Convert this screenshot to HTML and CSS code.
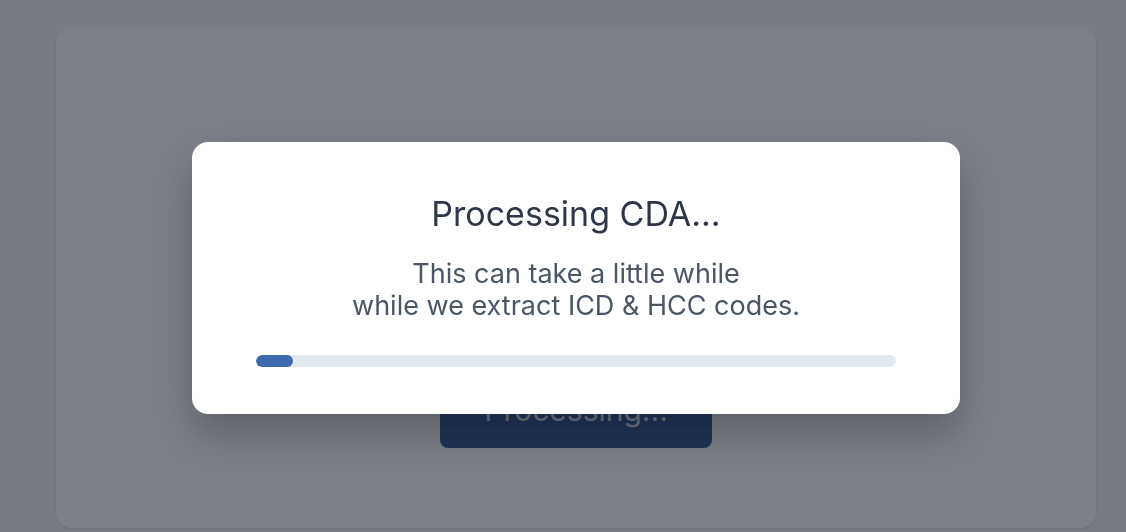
FILE: index.html
```html
<!DOCTYPE html>
<html lang="en">
  <head>
    <meta charset="UTF-8">
    <meta name="viewport" content="width=device-width, initial-scale=1.0">
    <title>Processing CDA</title>
    <link rel="stylesheet" href="styles.css">
  </head>
  <body>
    <div class="page">
      <div class="card">
        <button class="btn" disabled>Processing...</button>
      </div>
    </div>

    <div class="overlay">
      <div class="modal">
        <h2 class="modal-title">Processing CDA...</h2>
        <p class="modal-text">This can take a little while<br>while we extract ICD &amp; HCC codes.</p>
        <div class="progress">
          <div class="progress-fill" style="width: 5.8%"></div>
        </div>
      </div>
    </div>
  </body>
</html>
```

FILE: styles.css
```css
body {
    margin: 0;
    font-family: Inter, "Noto Sans", sans-serif;
    background-color: #f3f4f6;
    height: 100vh;
    overflow: hidden;
}

.page {
    padding: 27px 30px 0 56px;
}

.card {
    width: 1040px;
    height: 501px;
    background-color: #fff;
    border-radius: 16px;
    box-shadow: 0 1px 3px rgba(0, 0, 0, 0.1);
    display: flex;
    justify-content: center;
    align-items: flex-end;
    padding-bottom: 80px;
    box-sizing: border-box;
}

.btn {
    width: 272px;
    height: 76px;
    border: none;
    border-radius: 8px;
    background-color: #375898;
    color: rgba(255, 255, 255, 0.85);
    font-family: inherit;
    font-size: 30px;
}

/* modal backdrop, centred over the card */
.overlay {
    position: fixed;
    inset: 0;
    background-color: rgba(17, 24, 39, 0.55);
    display: flex;
    justify-content: center;
    align-items: flex-start;
    padding: 142px 0 0 26px;
}

.modal {
    width: 768px;
    box-sizing: border-box;
    padding: 52px 64px 47px;
    background-color: #fff;
    border-radius: 16px;
    box-shadow: 0 20px 40px rgba(0, 0, 0, 0.25);
    text-align: center;
}

.modal-title {
    margin: 0;
    font-size: 34px;
    line-height: 40px;
    font-weight: 400;
    color: #2d3748;
}

.modal-text {
    margin: 24px 0 33px;
    font-size: 27px;
    line-height: 32px;
    color: #4a5568;
}

.progress {
    height: 12px;
    background-color: #e2e8f0;
    border-radius: 9999px;
    overflow: hidden;
}

.progress-fill {
    height: 100%;
    background-color: #3d6aad;
    border-radius: 9999px;
}
```
